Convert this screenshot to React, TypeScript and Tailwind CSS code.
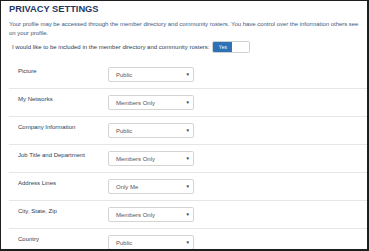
import React from "react";

const rows: [string, string][] = [
  ["Picture", "Public"],
  ["My Networks", "Members Only"],
  ["Company Information", "Public"],
  ["Job Title and Department", "Members Only"],
  ["Address Lines", "Only Me"],
  ["City, State, Zip", "Members Only"],
  ["Country", "Public"],
];

export default function App() {
  return (
    <div
      className="w-[369px] h-[251px] overflow-hidden bg-white border-l border-t border-r-2 border-b-2 border-[#1e1e1e] box-border"
      style={{ fontFamily: '"Liberation Sans", Arial, sans-serif' }}
    >
      <div className="pl-[8px] pt-[3px]">
        <h1 className="text-[9.3px] leading-[11px] font-bold text-[#1f3864]">
          PRIVACY SETTINGS
        </h1>
        <p className="mt-[5px] text-[6px] leading-[9px] text-[#3d5a80] pr-[1px] tracking-[-0.03px]">
          Your profile may be accessed through the member directory and community rosters. You have control over the information others see on your profile.
        </p>
        <div className="mt-[2px] flex items-center pl-[3px] h-[13px]">
          <span className="text-[6px] leading-[8px] text-[#2c3e55]">
            I would like to be included in the member directory and community rosters:
          </span>
          <div className="ml-[3px] flex h-[12px] w-[38px] rounded-[2px] border border-[#cfcfcf] overflow-hidden">
            <div className="w-[19px] bg-[#2e72b6] text-white text-[5px] leading-[10px] flex justify-center">
              Yes
            </div>
            <div className="flex-1 bg-white" />
          </div>
        </div>
        <div className="mt-[8px]">
          {rows.map(([label, value]) => (
            <div
              key={label}
              className="flex items-start h-[28px] border-b border-[#e6e6e6] pt-[6px] box-border"
            >
              <div className="w-[99px] pl-[9px] text-[6px] leading-[8px] text-[#2c3e55]">
                {label}
              </div>
              <div className="w-[86px] h-[15px] border border-[#d4d4d4] rounded-[2px] flex items-center justify-between pl-[7px] pr-[3px] bg-white">
                <span className="text-[6px] leading-[8px] text-[#555]">{value}</span>
                <span className="text-[4.5px] leading-[6px] text-[#333]">▼</span>
              </div>
            </div>
          ))}
        </div>
      </div>
    </div>
  );
}
